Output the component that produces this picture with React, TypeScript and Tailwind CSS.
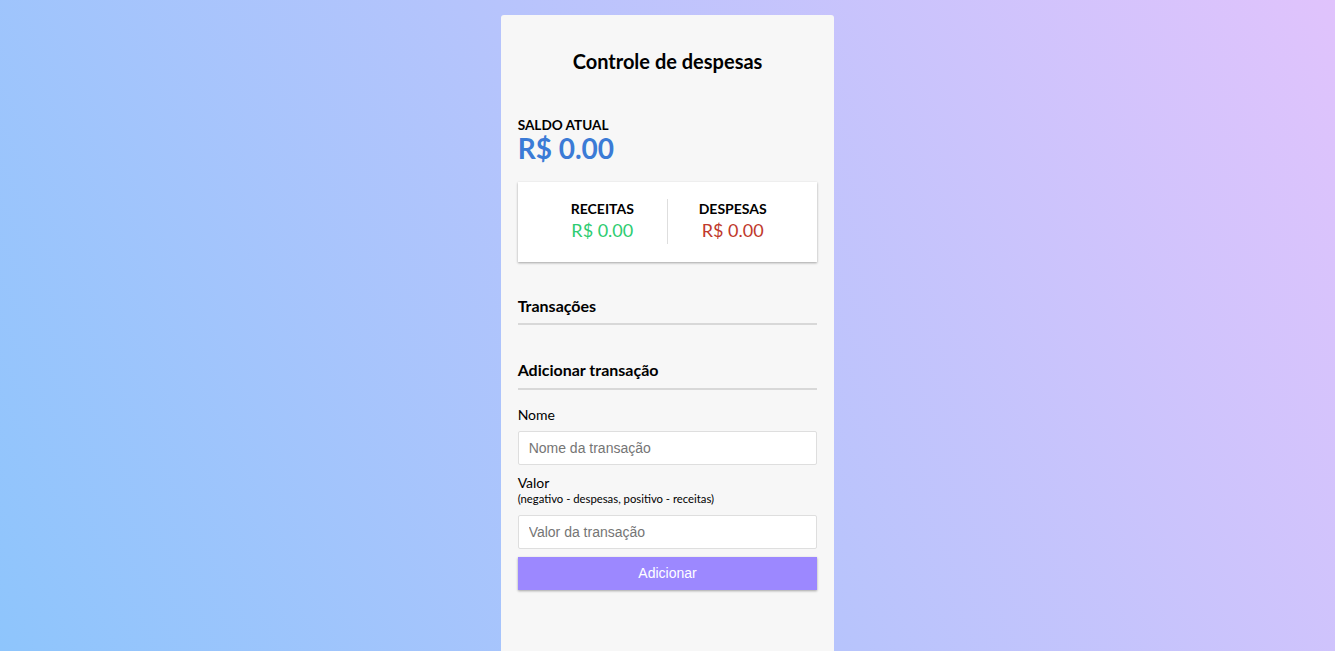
import React from 'react';

const App: React.FC = () => {
  return (
    <div className="h-[651px] overflow-hidden bg-[linear-gradient(62deg,#8ec5fc_0%,#e0c3fc_100%)] font-[Lato,sans-serif] text-black">
      <div className="mx-auto mt-[15px] w-[333.75px] min-h-[700px] rounded-t-[3px] bg-[#f7f7f7] px-[17px] pt-[33px]">
        {/* Header */}
        <h2 className="text-center text-[20px] leading-[26px] font-bold">Controle de despesas</h2>

        {/* Balance */}
        <h4 className="mt-[43px] text-[13.6px] leading-[17px] font-bold uppercase">Saldo atual</h4>
        <h1 className="text-[28px] leading-[28px] font-bold text-[#3b7bd6]">R$ 0.00</h1>

        {/* Income / Expense */}
        <div className="mt-[20px] flex h-[80px] bg-white px-[20px] pt-[17px] pb-[18px] shadow-[0_1px_3px_rgba(0,0,0,0.12),0_1px_2px_rgba(0,0,0,0.24)]">
          <div className="flex-1 border-r border-[#dedede] pt-[1px] text-center">
            <h4 className="text-[14px] leading-[17px] font-bold uppercase">Receitas</h4>
            <p className="mt-[2px] text-[18px] leading-[22px] text-[#2ecc71]">R$ 0.00</p>
          </div>
          <div className="flex-1 pt-[1px] text-center">
            <h4 className="text-[14px] leading-[17px] font-bold uppercase">Despesas</h4>
            <p className="mt-[2px] text-[18px] leading-[22px] text-[#c0392b]">R$ 0.00</p>
          </div>
        </div>

        {/* History */}
        <h3 className="mt-[34px] border-b-2 border-[#d8d8d8] pb-[8px] text-[16px] leading-[19px] font-bold">Transações</h3>
        <ul></ul>

        {/* Form */}
        <h3 className="mt-[35px] border-b-2 border-[#d8d8d8] pb-[9px] text-[16px] leading-[19px] font-bold">Adicionar transação</h3>
        <form onSubmit={(e) => e.preventDefault()}>
          <label className="mt-[16px] block text-[14px] leading-[17px]">Nome</label>
          <input
            type="text"
            placeholder="Nome da transação"
            className="mt-[8px] block h-[34px] w-full rounded-[2px] border border-[#dedede] bg-white px-[10px] font-[Liberation_Sans,Arial,sans-serif] text-[14px] placeholder:text-[#757575] outline-none"
          />
          <label className="mt-[9px] block text-[14px] leading-[17px]">Valor</label>
          <p className="mt-[1px] text-[11.3px] leading-[13px]">(negativo - despesas, positivo - receitas)</p>
          <input
            type="number"
            placeholder="Valor da transação"
            className="mt-[10px] block h-[34px] w-full rounded-[2px] border border-[#dedede] bg-white px-[10px] font-[Liberation_Sans,Arial,sans-serif] text-[14px] placeholder:text-[#757575] outline-none"
          />
          <button className="mt-[8px] block h-[33px] w-full bg-[#9c88ff] font-[Liberation_Sans,Arial,sans-serif] text-[14px] text-white shadow-[0_1px_3px_rgba(0,0,0,0.12),0_1px_2px_rgba(0,0,0,0.24)]">
            Adicionar
          </button>
        </form>
      </div>
    </div>
  );
};

export default App;
